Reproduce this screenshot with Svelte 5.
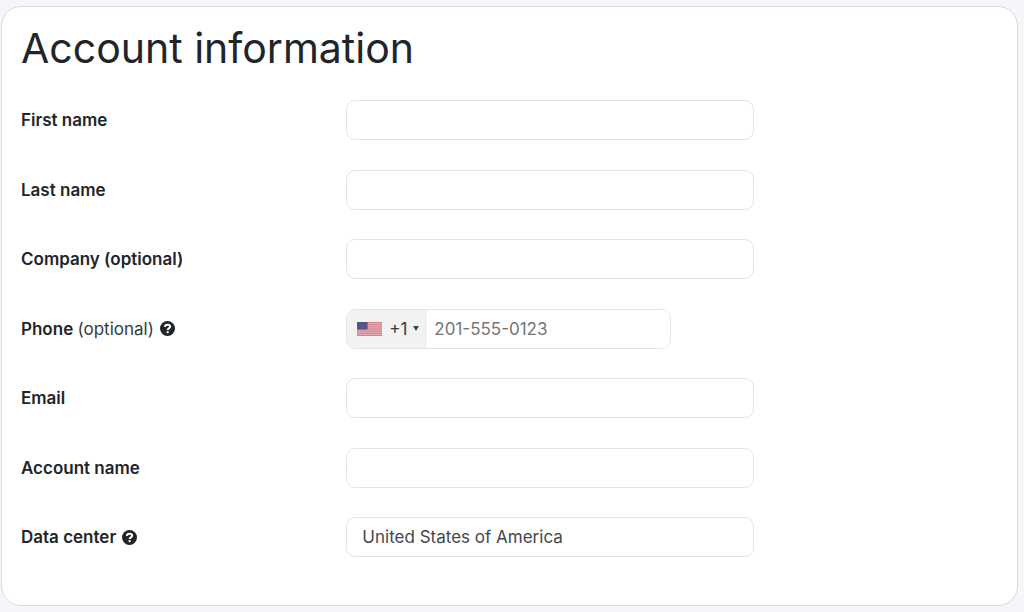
<script>
  const stripes = [0, 2, 4, 6, 8, 10, 12];
</script>

{#snippet help(label)}
  <button type="button" class="help" aria-label={label}>
    <svg viewBox="0 0 16 16" aria-hidden="true">
      <circle cx="8" cy="8" r="8" fill="currentColor" />
      <path d="M5.2 6.3C5.3 4.7 6.4 3.9 8.1 3.9c1.6 0 2.7.8 2.7 2.2 0 1.9-2.6 1.7-2.6 3.5" fill="none" stroke="#fff" stroke-width="2.2" />
      <rect x="6.9" y="10.7" width="2.5" height="2.4" rx="1.1" fill="#fff" />
    </svg>
  </button>
{/snippet}

<main>
  <form class="card">
    <h1>Account information</h1>
    <div class="rows">
      <div class="row">
        <label for="first">First name</label>
        <input id="first" type="text" />
      </div>
      <div class="row">
        <label for="last">Last name</label>
        <input id="last" type="text" />
      </div>
      <div class="row">
        <label for="company">Company (optional)</label>
        <input id="company" type="text" />
      </div>
      <div class="row">
        <div class="caption">
          <label for="phone">Phone <span>(optional)</span></label>
          {@render help('Phone help')}
        </div>
        <div class="phone">
          <button type="button" class="country" aria-label="Country code, United States +1">
            <svg class="flag" viewBox="0 0 26 13" preserveAspectRatio="none" aria-hidden="true">
              <rect width="26" height="13" fill="#e5b3bb" />
              {#each stripes as y}
                <rect {y} width="26" height="1" fill="#d4808b" />
              {/each}
              <rect width="11" height="7" fill="#55548a" />
            </svg>
            <span>+1</span>
            <svg class="arrow" viewBox="0 0 6 5" aria-hidden="true"><path d="M0 0h6L3 5z" fill="#444" /></svg>
          </button>
          <input id="phone" type="tel" placeholder="201-555-0123" />
        </div>
      </div>
      <div class="row">
        <label for="email">Email</label>
        <input id="email" type="email" />
      </div>
      <div class="row">
        <label for="account">Account name</label>
        <input id="account" type="text" />
      </div>
      <div class="row">
        <div class="caption">
          <label for="center">Data center</label>
          {@render help('Data center help')}
        </div>
        <select id="center">
          <option>United States of America</option>
        </select>
      </div>
    </div>
  </form>
</main>

<style>
  :global(body) {
    background: #f5f6f9;
    color: #212529;
    font-family: Inter, sans-serif;
    font-size: 17px;
  }
  main {
    box-sizing: border-box;
    display: flex;
    min-height: 100vh;
    padding: 6px 6px 6px 1px;
  }
  .card {
    box-sizing: border-box;
    display: flex;
    flex: 1;
    flex-direction: column;
    padding: 13px 20px 48px 19px;
    background: #fff;
    border: 1px solid #d5dae0;
    border-radius: 20px;
  }
  h1 {
    margin: 0 0 24px;
    font-size: 41px;
    line-height: 56px;
    font-weight: 400;
  }
  .rows {
    display: flex;
    flex: 1;
    flex-direction: column;
    justify-content: space-between;
    gap: 24px;
  }
  .row {
    display: grid;
    grid-template-columns: 1fr 2fr;
    align-items: center;
  }
  label {
    font-weight: 600;
  }
  label span {
    font-weight: 400;
    color: #343a40;
  }
  .caption {
    display: flex;
    align-items: center;
    gap: 6px;
  }
  .help {
    display: flex;
    padding: 0;
    border: 0;
    background: none;
    color: #212529;
  }
  .help svg {
    width: 15px;
    height: 15px;
  }
  input,
  select,
  button {
    font: inherit;
  }
  input,
  select,
  .phone {
    box-sizing: border-box;
    width: 100%;
    max-width: 408px;
    height: 40px;
    padding: 0 15px;
    background: #fff;
    border: 1px solid #e2e5e8;
    border-radius: 9px;
    color: #42474c;
    appearance: none;
  }
  .phone {
    display: flex;
    max-width: 325px;
    padding: 0;
    overflow: hidden;
  }
  .phone input {
    flex: 1;
    min-width: 0;
    height: 100%;
    padding: 0 7px;
    border: 0;
    border-radius: 0;
  }
  .phone input::placeholder {
    color: #757575;
    opacity: 1;
  }
  .country {
    display: flex;
    flex: none;
    align-items: center;
    width: 80px;
    padding: 0 0 0 10px;
    background: #f2f2f2;
    border: 0;
    color: #343a40;
  }
  .flag {
    width: 25px;
    height: 14px;
    margin-right: 7px;
  }
  .arrow {
    width: 6px;
    height: 5px;
    margin-left: 5px;
  }
</style>
